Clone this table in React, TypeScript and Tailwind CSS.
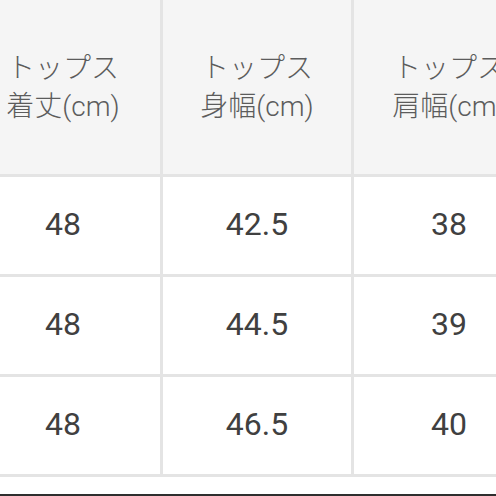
import React from "react";

const headers = [
  ["トップス", "着丈(cm)"],
  ["トップス", "身幅(cm)"],
  ["トップス", "肩幅(cm)"],
];

const rows = [
  ["48", "42.5", "38"],
  ["48", "44.5", "39"],
  ["48", "46.5", "40"],
];

export default function App() {
  return (
    <div
      className="w-[496px] h-[496px] overflow-hidden bg-white flex flex-col"
      style={{ fontFamily: "Roboto, 'Noto Sans CJK JP', sans-serif" }}
    >
      <div className="ml-[-34px] w-[580px] grid grid-cols-[194px_188px_190px] grid-rows-[174px_97px_97px_97px] gap-[3px] bg-[#e4e4e4] pb-[3px]">
        {headers.map((h, i) => (
          <div
            key={i}
            className="bg-[#f5f5f5] flex flex-col items-center justify-center text-[28px] leading-[38px] text-[#5c5c5c] font-light pt-[1px]"
          >
            <div>{h[0]}</div>
            <div>{h[1]}</div>
          </div>
        ))}
        {rows.map((r, ri) =>
          r.map((c, ci) => (
            <div
              key={`${ri}-${ci}`}
              className="bg-white flex items-center justify-center text-[32px] text-[#404040] pb-[4px]"
            >
              {c}
            </div>
          ))
        )}
      </div>
      <div className="flex-1 bg-white" />
      <div className="h-[2px] bg-[#2e2e2e]" />
    </div>
  );
}
